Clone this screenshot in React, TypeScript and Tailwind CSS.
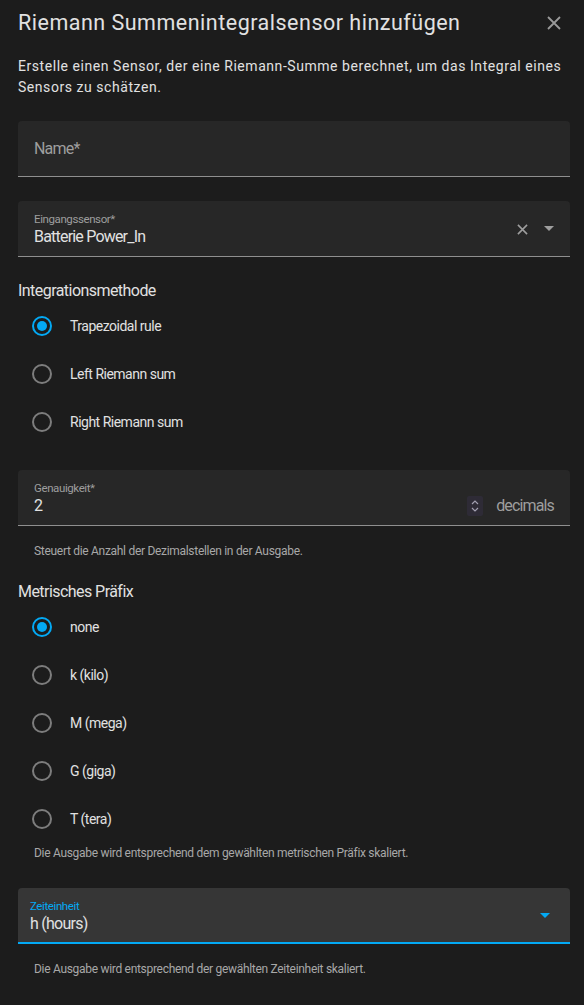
import React from "react";

const font = { fontFamily: "Roboto, 'Noto Sans', sans-serif" };

function Radio({ label, checked }: { label: string; checked?: boolean }) {
  return (
    <div className="flex h-[48px] items-center pl-[14px]">
      <div
        className={
          "flex h-[20px] w-[20px] items-center justify-center rounded-full border-2 " +
          (checked ? "border-[#03a9f4]" : "border-[#7d7d7d]")
        }
      >
        {checked && <div className="h-[10px] w-[10px] rounded-full bg-[#03a9f4]" />}
      </div>
      <div className="ml-[18px] pt-[1px] text-[14px] tracking-[-0.5px] text-[#e1e1e1]">{label}</div>
    </div>
  );
}

function Caret({ color }: { color: string }) {
  return (
    <svg width="10" height="5" viewBox="0 0 10 5">
      <path d="M0 0 L10 0 L5 5 Z" fill={color} />
    </svg>
  );
}

export default function App() {
  return (
    <div className="min-h-[1005px] w-[584px] bg-[#1c1c1c] pl-[18px] pr-[14px]" style={font}>
      {/* Header */}
      <div className="flex h-[44px] items-center justify-between pt-[2px]">
        <h1 className="text-[21.5px] font-normal tracking-[0.5px] text-[#e1e1e1]">Riemann Summenintegralsensor hinzufügen</h1>
        <svg width="14" height="14" viewBox="0 0 14 14" className="mr-[9px]">
          <path d="M1 1 L13 13 M13 1 L1 13" stroke="#9a9a9a" strokeWidth="1.8" />
        </svg>
      </div>

      <p className="mt-[11px] pt-[1px] text-[14px] leading-[21px] tracking-[0.55px] text-[#e1e1e1]">
        Erstelle einen Sensor, der eine Riemann-Summe berechnet, um das Integral eines Sensors zu schätzen.
      </p>

      {/* Name */}
      <div className="mt-[23px] flex h-[56px] items-center rounded-t-[4px] border-b border-[#8f8f8f] bg-[#272727] px-[16px]">
        <span className="text-[16px] tracking-[-0.8px] text-[#9e9e9e]">Name*</span>
      </div>

      {/* Eingangssensor */}
      <div className="mt-[24px] flex h-[56px] items-center rounded-t-[4px] border-b border-[#8f8f8f] bg-[#272727] pl-[16px] pr-[16px]">
        <div className="flex flex-1 flex-col pt-[3px]">
          <span className="text-[11.5px] leading-[14px] tracking-[-0.4px] text-[#9e9e9e]">Eingangssensor*</span>
          <span className="text-[16px] leading-[22px] tracking-[-0.8px] text-[#e1e1e1]">Batterie Power_In</span>
        </div>
        <svg width="11" height="11" viewBox="0 0 12 12" className="mr-[16px] mt-[2px]">
          <path d="M1 1 L11 11 M11 1 L1 11" stroke="#9e9e9e" strokeWidth="1.7" />
        </svg>
        <Caret color="#9e9e9e" />
      </div>

      <div className="mt-[22px] text-[16px] leading-[24px] tracking-[-0.55px] text-[#e1e1e1]">Integrationsmethode</div>
      <div className="-mt-[1px] flex flex-col">
        <Radio label="Trapezoidal rule" checked />
        <Radio label="Left Riemann sum" />
        <Radio label="Right Riemann sum" />
      </div>

      {/* Genauigkeit */}
      <div className="mt-[24px] flex h-[56px] items-center rounded-t-[4px] border-b border-[#8f8f8f] bg-[#272727] pl-[16px] pr-[16px]">
        <div className="flex flex-1 flex-col pt-[3px]">
          <span className="text-[11.5px] leading-[14px] tracking-[-0.4px] text-[#9e9e9e]">Genauigkeit*</span>
          <span className="text-[16px] leading-[22px] text-[#e1e1e1]">2</span>
        </div>
        <div className="mr-[13px] mt-[16px] flex h-[20px] w-[16px] items-center justify-center rounded-[2px] bg-[#2e2b36]">
          <svg width="8" height="14" viewBox="0 0 8 14">
            <path d="M1 5 L4 2 L7 5 M1 9 L4 12 L7 9" stroke="#a29fb0" strokeWidth="1.2" fill="none" />
          </svg>
        </div>
        <span className="mt-[16px] text-[16px] tracking-[-0.85px] text-[#9e9e9e]">decimals</span>
      </div>
      <div className="px-[16px] pt-[17px] text-[12px] leading-[16px] tracking-[-0.3px] text-[#a8a8a8]">
        Steuert die Anzahl der Dezimalstellen in der Ausgabe.
      </div>

      <div className="mt-[21px] text-[16px] leading-[24px] tracking-[-0.55px] text-[#e1e1e1]">Metrisches Präfix</div>
      <div className="-mt-[1px] flex flex-col">
        <Radio label="none" checked />
        <Radio label="k (kilo)" />
        <Radio label="M (mega)" />
        <Radio label="G (giga)" />
        <Radio label="T (tera)" />
      </div>
      <div className="px-[16px] pt-[2px] text-[12px] leading-[16px] tracking-[-0.3px] text-[#a8a8a8]">
        Die Ausgabe wird entsprechend dem gewählten metrischen Präfix skaliert.
      </div>

      {/* Zeiteinheit */}
      <div className="mt-[27px] flex h-[56px] items-center rounded-t-[4px] border-b-2 border-[#03a9f4] bg-[#363636] pl-[12px] pr-[20px]">
        <div className="flex flex-1 flex-col pt-[4px]">
          <span className="text-[11.5px] leading-[14px] tracking-[-0.4px] text-[#03a9f4]">Zeiteinheit</span>
          <span className="text-[16px] leading-[22px] tracking-[-0.75px] text-[#e1e1e1]">h (hours)</span>
        </div>
        <Caret color="#03a9f4" />
      </div>
      <div className="px-[16px] pt-[17px] text-[12px] leading-[16px] tracking-[-0.3px] text-[#a8a8a8]">
        Die Ausgabe wird entsprechend der gewählten Zeiteinheit skaliert.
      </div>
    </div>
  );
}
